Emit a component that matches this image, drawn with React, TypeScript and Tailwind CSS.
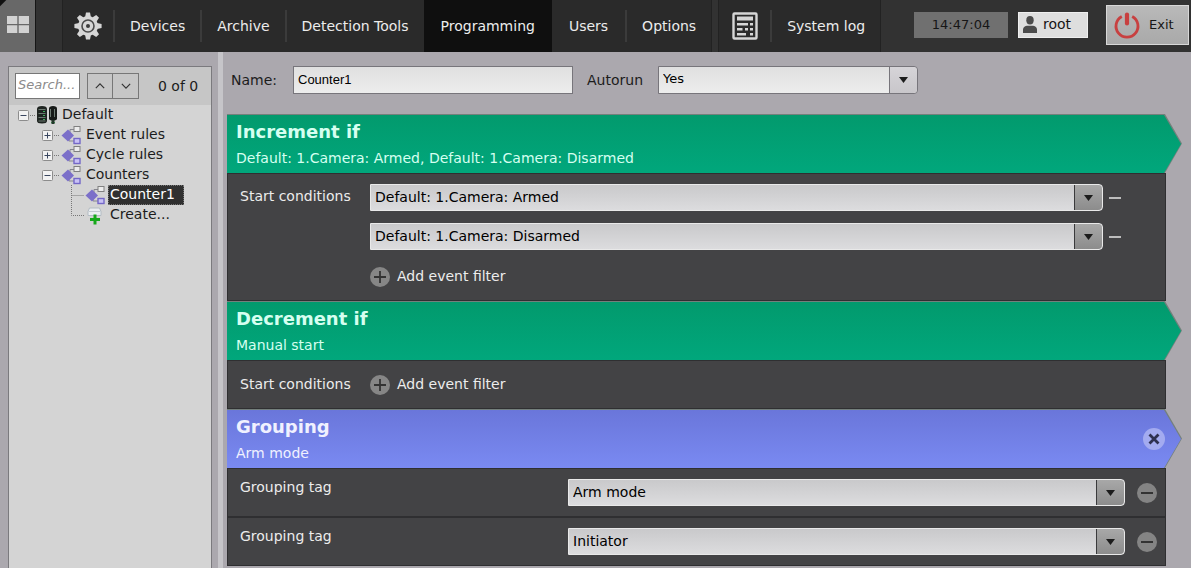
import React from "react";

type TreeKind = "server" | "rule" | "create";
type Expander = "plus" | "minus" | "branch" | "last";

const NAV = ["Devices", "Archive", "Detection Tools", "Programming", "Users", "Options"];

const NAV_TONE: Record<string, string> = {
  Programming: "px-[17px] bg-[#0f0f0f]",
  Users: "px-[17px]",
};

const TREE: { label: string; level: number; kind: TreeKind; expander: Expander; selected?: boolean }[] = [
  { label: "Default", level: 0, kind: "server", expander: "minus" },
  { label: "Event rules", level: 1, kind: "rule", expander: "plus" },
  { label: "Cycle rules", level: 1, kind: "rule", expander: "plus" },
  { label: "Counters", level: 1, kind: "rule", expander: "minus" },
  { label: "Counter1", level: 2, kind: "rule", expander: "branch", selected: true },
  { label: "Create...", level: 2, kind: "create", expander: "last" },
];

const INDENT = ["pl-[3px]", "pl-[27px]", "pl-[51px]"];

function WindowsIcon() {
  return (
    <svg width="22" height="17" viewBox="0 0 22 17" fill="#d2d2d2" aria-hidden="true">
      <path d="M0 0h10.3v8H0zM11.7 0H22v8H11.7zM0 9.300h10.300V17H0zM11.700 9.300H22V17H11.700z" />
    </svg>
  );
}

function GearIcon() {
  const teeth = [0, 45, 90, 135, 180, 225, 270, 315];
  return (
    <svg width="28" height="28" viewBox="-14 -14 28 28" aria-hidden="true">
      {teeth.map((a) => (
        <path key={a} d="M-2.900 -9 L-2 -13.600 H2 L2.900 -9 Z" fill="#d6d6d6" transform={`rotate(${a})`} />
      ))}
      <circle r="10" fill="#d6d6d6" />
      <circle r="6" fill="none" stroke="#4a4a4a" strokeWidth="1.600" />
      <circle r="2" fill="#3a3a3a" />
    </svg>
  );
}

function LogIcon() {
  return (
    <svg width="26" height="28" viewBox="0 0 26 28" aria-hidden="true">
      <rect x="1.500" y="1.500" width="23" height="25" rx="1" fill="#2b2b2b" stroke="#d6d6d6" strokeWidth="2.400" />
      <path d="M5 4.500h16v4H5zM5 11h11v2.400H5zM5 16h5.500v2.400H5zM5 21h9v2.400H5zM18 11h3v2.400h-3zM13 16h3v2.400h-3zM18 16h3v2.400h-3zM18 21h3v2.400h-3z" fill="#d6d6d6" />
    </svg>
  );
}

function UserIcon() {
  return (
    <svg width="14" height="17" viewBox="0 0 14 17" fill="#4b4b4b" aria-hidden="true">
      <ellipse cx="7" cy="4.300" rx="3.700" ry="4.200" />
      <path d="M0 17v-3.200C0 11 2.500 9.800 4.500 9.800h5c2 0 4.500 1.200 4.500 4V17z" />
    </svg>
  );
}

function PowerIcon() {
  return (
    <svg width="28" height="28" viewBox="0 0 28 28" fill="none" stroke="#c84040" aria-hidden="true">
      <path d="M8.800 5.500A11 11 0 1 0 19.200 5.500" strokeWidth="2.800" />
      <path d="M14 3.500v9" strokeWidth="4.200" strokeLinecap="round" />
    </svg>
  );
}

function ExpanderMark({ kind }: { kind: Expander }) {
  const box = kind === "plus" || kind === "minus";
  return (
    <svg width="24" height="20" viewBox="0 0 24 20" className="shrink-0" aria-hidden="true">
      <path
        d={box ? "M18 10.500H24" : kind === "last" ? "M11.500 0V10.500H24" : "M11.500 0V20M11.500 10.500H24"}
        fill="none"
        stroke="#777"
        strokeDasharray="1 1"
      />
      {box && (
        <>
          <rect x="6.500" y="5.500" width="10" height="10" rx="1" fill="#f2f2f2" stroke="#8c8c8c" />
          <path d={kind === "plus" ? "M8.500 10.500h6M11.500 7.500v6" : "M8.500 10.500h6"} stroke="#39465f" />
        </>
      )}
    </svg>
  );
}

function TreeIcon({ kind }: { kind: TreeKind }) {
  if (kind === "server") {
    return (
      <svg width="24" height="20" viewBox="0 0 24 20" className="shrink-0" aria-hidden="true">
        <path d="M1 4Q1 1 6 1t5 3v12q0 2.500-5 2.500T1 16z" fill="#1f2421" />
        <path d="M13 3.500Q13 1 17 1t4 2.500v10q0 2-4 2t-4-2z" fill="#171a18" />
        <path d="M2.500 4.500h7M2.500 8.500h7M2.500 12.500h7M2.500 16h7M14.500 4v8M18.500 4v8" stroke="#6d7a72" />
        <path d="M7 6.500h2M7 10.500h2M7 14.500h2M15 17.500h4" stroke="#3fae5c" />
        <rect x="15.500" y="15" width="3" height="4" fill="#24382b" />
      </svg>
    );
  }
  if (kind === "create") {
    return (
      <svg width="24" height="20" viewBox="0 0 24 20" className="shrink-0" aria-hidden="true">
        <path d="M5.500 3h10l1.500 3.500v4H4v-4z" fill="#eceff1" stroke="#b3bcc4" />
        <path d="M4.500 6.500h12" stroke="#c3cad0" />
        <path d="M11 9.500v10M6 14.500h10" stroke="#17a81b" strokeWidth="3" />
      </svg>
    );
  }
  return (
    <svg width="24" height="20" viewBox="0 0 24 20" className="shrink-0" aria-hidden="true">
      <path d="M10 10V4.500h4M9 11v5h5" fill="none" stroke="#86868e" />
      <path d="M1.500 10.500 8 4.500l6 6-6 6z" fill="#7b6fc9" />
      <rect x="14" y="1.500" width="6" height="5" fill="#ececec" stroke="#808080" />
      <rect x="14" y="13.500" width="6" height="5" fill="#c9c2f5" stroke="#7468c8" strokeWidth="1.400" />
    </svg>
  );
}

function Separator() {
  return <span className="h-8 w-0.5 shrink-0 bg-[#3b3b3b]" />;
}

function Dropdown({ label, value, options, light }: { label?: string; value: string; options: string[]; light?: boolean }) {
  const tone = light
    ? "h-7 border-[#77757b] from-[#e0e0e0] to-[#ededed] pb-0.5 text-[13px]"
    : "h-[27px] border-[#e9e9e9] from-[#c9c9cb] to-[#dcdcde] text-[14px]";
  const cap = light ? "border-[#77757b] from-[#d6d4d8] to-[#c8c6ca]" : "border-[#3a3a3c] from-[#a8a8a8] to-[#8c8c8c]";
  return (
    <span className="relative flex w-full">
      <select
        id={light ? "autorun" : undefined}
        aria-label={label}
        defaultValue={value}
        className={`w-full appearance-none rounded-r-sm border bg-linear-to-b pr-8 pl-1 text-black outline-none ${tone}`}
      >
        {options.map((o) => (
          <option key={o}>{o}</option>
        ))}
      </select>
      <span
        className={`pointer-events-none absolute inset-y-px right-px flex w-7 items-center justify-center rounded-r-sm border-l bg-linear-to-b ${cap}`}
      >
        <svg width="9" height="6" viewBox="0 0 9 6" aria-hidden="true">
          <path d="M0 0h9L4.500 6z" fill="#1c1c1c" />
        </svg>
      </span>
    </span>
  );
}

function Header({ title, note, blue, children }: { title: string; note: string; blue?: boolean; children?: React.ReactNode }) {
  const fill = blue ? "from-[#6a76da] to-[#7a8af2] text-[#f0f1ff]" : "from-[#029a6d] to-[#01a77c] text-[#d5fff0]";
  return (
    <header className="bg-[#74807c] pt-px pr-px [clip-path:polygon(0_0,calc(100%-17px)_0,100%_50%,calc(100%-17px)_100%,0_100%)]">
      <div
        className={`flex h-[58px] items-center justify-between bg-linear-to-b pr-4 pl-[9px] [clip-path:polygon(0_0,calc(100%-17px)_0,100%_50%,calc(100%-17px)_100%,0_100%)] ${fill}`}
      >
        <div>
          <h2 className="text-[18px] leading-7 font-bold">{title}</h2>
          <p className="text-[14px] leading-6">{note}</p>
        </div>
        {children}
      </div>
    </header>
  );
}

function AddFilter() {
  return (
    <button type="button" className="flex items-center gap-[7px]">
      <svg width="20" height="20" viewBox="0 0 20 20" aria-hidden="true">
        <circle cx="10" cy="10" r="10" fill="#868686" />
        <path d="M4 10h12M10 4v12" stroke="#333" strokeWidth="1.800" />
      </svg>
      Add event filter
    </button>
  );
}

const EVENTS = ["Default: 1.Camera: Armed", "Default: 1.Camera: Disarmed"];
const TAGS = ["Arm mode", "Initiator"];
const BODY = "mr-4 border border-[#2f2f31] bg-[#434345] text-[#ececec]";

export default function App() {
  return (
    <div className="flex h-screen flex-col overflow-hidden bg-[#aba8ae] font-['DejaVu_Sans',sans-serif] text-[14px] text-[#1c1c1c]">
      <nav className="flex h-[52px] shrink-0 bg-[#323232] text-[#ececec]">
        <button
          type="button"
          aria-label="Layouts"
          className="flex w-9 items-center justify-center border-r border-[#161616] bg-linear-[135deg,#111_4px,#686868_5px] pb-1"
        >
          <WindowsIcon />
        </button>
        <div className="ml-[26px] flex items-center border-x border-[#222] bg-[#2a2a2a]">
          <button type="button" aria-label="Settings" className="flex w-[50px] justify-center">
            <GearIcon />
          </button>
          {NAV.map((item) => (
            <React.Fragment key={item}>
              {item !== "Programming" && item !== "Users" && <Separator />}
              <button type="button" className={`h-full whitespace-nowrap ${NAV_TONE[item] ?? "px-[15px]"}`}>
                {item}
              </button>
            </React.Fragment>
          ))}
        </div>
        <div className="ml-1.5 flex items-center border-x border-[#222] bg-[#2a2a2a]">
          <span className="flex w-[51px] justify-center">
            <LogIcon />
          </span>
          <Separator />
          <button type="button" className="h-full px-[15px] whitespace-nowrap">
            System log
          </button>
        </div>
        <div className="ml-auto flex items-center pr-0.5 pb-[3px] text-[13px] text-[#161616]">
          <time className="flex h-[26px] w-[94px] items-center justify-center bg-[#707070]">14:47:04</time>
          <button type="button" className="ml-2.5 flex h-[26px] w-[70px] items-center gap-1.5 border border-[#efefef] bg-[#dedede] pl-1 text-[14px]">
            <UserIcon />
            root
          </button>
          <button type="button" className="ml-[18px] flex h-10 w-[83px] items-center gap-2 border border-[#d8d8d8] bg-linear-to-b from-[#b9b9b9] to-[#a9a9a9] pl-1.5">
            <PowerIcon />
            Exit
          </button>
        </div>
      </nav>

      <div className="flex min-h-0 flex-1">
        <aside className="mt-3.5 ml-2 w-[204px] shrink-0 border border-b-0 border-[#7b7a7e] bg-[#d4d4d4]">
          <div className="flex h-[38px] items-center bg-[#c6c6c6] pl-1.5">
            <input
              aria-label="Search"
              placeholder="Search..."
              className="h-[26px] w-[65px] border border-[#777] bg-white px-0.5 pb-1 text-[13px] italic outline-none placeholder:text-[#8b8b8b]"
            />
            <div className="ml-[7px] flex divide-x divide-[#777] border border-[#777]">
              {["M1 6l5-5 5 5", "M1 1l5 5 5-5"].map((d, i) => (
                <button key={d} type="button" aria-label={i ? "Next" : "Previous"} className="flex h-6 w-[25px] items-center justify-center">
                  <svg width="10" height="6" viewBox="0 0 12 7" fill="none" stroke="#333" strokeWidth="1.400" aria-hidden="true">
                    <path d={d} />
                  </svg>
                </button>
              ))}
            </div>
            <span className="ml-[19px] whitespace-nowrap">0 of 0</span>
          </div>
          <ul>
            {TREE.map((n) => (
              <li key={n.label} className={`flex h-5 items-center ${INDENT[n.level]}`}>
                <ExpanderMark kind={n.expander} />
                <TreeIcon kind={n.kind} />
                <a
                  href="#"
                  className={`flex h-5 items-center border border-dotted pr-2 pb-0.5 pl-px whitespace-nowrap ${
                    n.selected ? "border-[#777] bg-[#303030] text-white" : "border-transparent"
                  }`}
                >
                  {n.label}
                </a>
              </li>
            ))}
          </ul>
        </aside>
        <div className="ml-1.5 w-[5px] shrink-0 bg-[#c6c5c9]" />

        <main className="min-w-0 flex-1 pt-3.5 pr-[9px] pl-1">
          <form className="mb-5 flex items-center pl-1">
            <label htmlFor="name" className="w-[62px]">
              Name:
            </label>
            <input
              id="name"
              defaultValue="Counter1"
              className="h-7 w-[280px] border border-[#77757b] bg-linear-to-b from-[#e0e0e0] to-[#ededed] px-1 pb-0.5 font-['Liberation_Sans',sans-serif] text-[13px] text-black outline-none"
            />
            <label htmlFor="autorun" className="ml-3.5 w-[71px]">
              Autorun
            </label>
            <div className="w-[260px]">
              <Dropdown value="Yes" options={["Yes", "No"]} light />
            </div>
          </form>

          <section>
            <Header title="Increment if" note="Default: 1.Camera: Armed, Default: 1.Camera: Disarmed" />
            <div className={`flex h-32 pt-2.5 pr-11 pl-3 ${BODY}`}>
              <span className="w-[130px] shrink-0 pt-0.5">Start conditions</span>
              <div className="flex flex-1 flex-col items-start gap-3">
                {EVENTS.map((e) => (
                  <div key={e} className="flex w-full items-center gap-1.5">
                    <Dropdown label="Start condition" value={e} options={EVENTS} />
                    <button type="button" aria-label="Remove condition" className="h-4 w-3 shrink-0">
                      <span className="block h-0.5 bg-[#bdbdbd]" />
                    </button>
                  </div>
                ))}
                <div className="pt-1">
                  <AddFilter />
                </div>
              </div>
            </div>
          </section>

          <section>
            <Header title="Decrement if" note="Manual start" />
            <div className={`flex h-[49px] items-center pl-3 ${BODY}`}>
              <span className="w-[130px] shrink-0">Start conditions</span>
              <AddFilter />
            </div>
          </section>

          <section>
            <Header title="Grouping" note="Arm mode" blue>
              <button type="button" aria-label="Close">
                <svg width="22" height="22" viewBox="0 0 22 22" aria-hidden="true">
                  <circle cx="11" cy="11" r="11" fill="#a3abf0" />
                  <path d="M6.500 6.500l9 9M15.500 6.500l-9 9" stroke="#2d3050" strokeWidth="2.800" />
                </svg>
              </button>
            </Header>
            {TAGS.map((t) => (
              <div key={t} className={`flex h-[49px] items-start pt-2.5 pr-2 pl-3 ${BODY}`}>
                <span className="w-[328px] shrink-0 leading-4">Grouping tag</span>
                <Dropdown label="Grouping tag" value={t} options={TAGS} />
                <button type="button" aria-label="Remove tag" className="mt-1 ml-3 shrink-0">
                  <svg width="20" height="20" viewBox="0 0 20 20" aria-hidden="true">
                    <circle cx="10" cy="10" r="10" fill="#848484" />
                    <path d="M4 10h12" stroke="#333" strokeWidth="2" />
                  </svg>
                </button>
              </div>
            ))}
          </section>
        </main>
      </div>
    </div>
  );
}
